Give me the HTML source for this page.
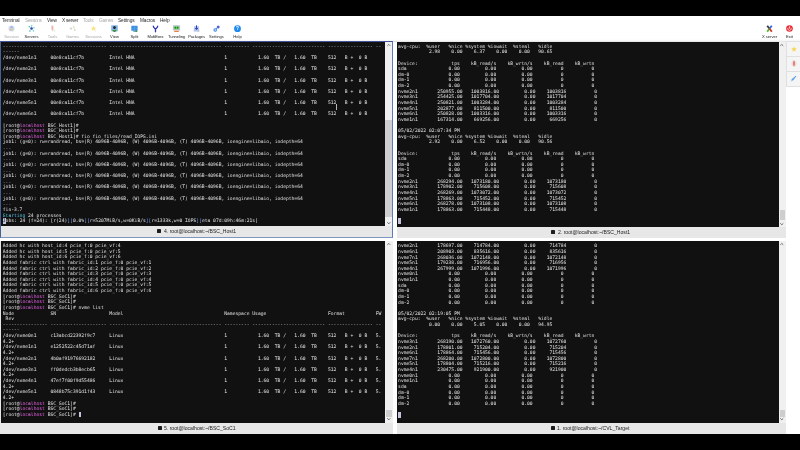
<!DOCTYPE html>
<html lang="en">
<head>
<meta charset="utf-8">
<title>MobaXterm</title>
<style>
html,body{margin:0;padding:0}
body{width:800px;height:450px;position:relative;overflow:hidden;background:#fff;font-family:"Liberation Sans",sans-serif;color:#222}
#top{position:absolute;left:0;top:0;width:800px;height:16px;background:#000}
#bot{position:absolute;left:0;top:434px;width:800px;height:16px;background:#000}
#menu{position:absolute;left:0;top:16px;width:800px;height:8px;background:#fff;font-size:4.75px;line-height:9.6px;white-space:nowrap;color:#2a2a2a}
#menu span{position:absolute;top:0}
#menu .g{color:#a9a9a9}
#tb{position:absolute;left:0;top:24px;width:800px;height:16.5px;background:linear-gradient(#fff 0,#fff 88%,#f4f4f4 100%);border-bottom:0.5px solid #e2e2e2}
.btn{position:absolute;top:0;width:21px;height:17px;text-align:center}
.btn svg{position:absolute;left:7px;top:1.4px;width:7px;height:7px;overflow:visible}
.btn b{position:absolute;left:-5px;right:-5px;top:10.2px;font-weight:normal;font-size:4.1px;line-height:5px;color:#1c1c1c;white-space:nowrap}
.btn.g b{color:#a6a6a6}
.pane{position:absolute;background:#e7e7e7;overflow:hidden;box-sizing:border-box}
#p1{left:0;top:41px;width:393px;height:196.6px}
#p2{left:397px;top:41px;width:389.6px;height:196.7px}
#p3{left:0;top:241px;width:393px;height:193px}
#p4{left:397px;top:241px;width:389.6px;height:193px}
.pane.act{border:1px solid #5c7bb8;border-top-color:#41539a;border-bottom:1.6px solid #7f95c4;border-left-color:#4a5f95}
.term{position:absolute;margin:0;left:0;top:0;will-change:transform;color:#d6d6d6;-webkit-text-stroke:0.04px #d6d6d6;font-family:"DejaVu Sans Mono","Liberation Mono",monospace;font-size:4.68px;line-height:5.625px;white-space:pre;overflow:hidden;box-sizing:border-box;padding:2.6px 0 0 2.6px}
#p1 .term{width:384px;height:184.5px;left:0.3px;top:0;padding:1.8px 0 0 1.8px}
#p2 .term{width:381.5px;height:185.5px;top:0.8px;padding:1.7px 0 0 1.1px}
#p3 .term{width:385px;height:182px;left:1.3px;padding:2px 0 0 1.8px}
#p4 .term{width:381.5px;height:182px;padding:2.3px 0 0 1.1px}
.m{color:#e13ee1}
.c{color:#35b5d8}
.b{color:#4d86f0}
.d{color:#9c9ca0}
.d2{color:#8c8c8c}
.cur{background:#c4c4dc;color:#111;display:inline-block;width:2.82px;height:5.9px;vertical-align:top;margin-top:-0.2px;-webkit-text-stroke:0}
.sb{position:absolute;top:0;width:8px;background:#f0f0f0}
#p1 .sb{left:384px;width:7.2px;height:184.5px}
#p2 .sb{left:381.7px;top:0.8px;height:185.5px}
#p3 .sb{left:385px;width:8px;height:182px}
#p4 .sb{left:381.7px;height:182px}
.sb i{position:absolute;left:0;right:0;display:block}
.sb svg{position:absolute;left:1.8px;width:3.6px;height:2.2px;overflow:visible}
.sb svg.up{top:2.4px}
.sb svg.dn{bottom:2.4px}
.sb .th{background:#cecece}
.tab{position:absolute;left:0;right:0;bottom:0;height:10.5px;background:#e7e7e7;font-size:5.1px;line-height:10.5px;white-space:nowrap;color:#222}
.tab .ti{position:absolute;top:3.3px;width:4.4px;height:3.7px;background:#1c1c1c;border-radius:0.4px}
.tab .tt{position:absolute;top:-0.2px;will-change:transform;color:#222}
#p1 .ti{left:156px}#p1 .tt{left:162.8px}
#p2 .ti{left:153.8px}#p2 .tt{left:160.5px}
#p3 .ti{left:157.5px;top:2.6px}#p3 .tt{left:163.8px}
#p4 .ti{left:153.8px;top:2.6px}#p4 .tt{left:160.2px}
#side{position:absolute;left:786.4px;top:41.5px;width:13px;height:393px;background:#fff}
.sbtn{width:13.6px;height:15px;box-sizing:border-box;background:#f5f5f5;border-left:0.6px solid #e0e0e0;border-bottom:0.6px solid #e0e0e0;display:flex;align-items:center;justify-content:center}

.bg{position:absolute;background:#111}
#p1 .bg{width:383.7px;height:184.5px;left:0.3px;top:0}
#p2 .bg{width:381.5px;height:185.5px;top:0.8px;left:0}
#p3 .bg{width:383.7px;height:182px;left:1.3px;top:0}
#p4 .bg{width:381.5px;height:182px;left:0;top:0}

#p3 .tt,#p4 .tt{top:-0.7px}
#menu span,.btn b{will-change:transform}

#ibeam{position:absolute;left:335.1px;top:61.7px;width:0.7px;height:6.2px;background:#b4b4b4}
#p2 .sb .th,#p3 .sb .th,#p4 .sb .th{left:1px;right:1.3px}
.btn.g svg{opacity:.8}

</style>
</head>
<body>
<div id="top"></div>
<div id="menu">
<span style="left:2.0px;letter-spacing:-0.056px">Terminal</span>
<span class="g" style="left:24.8px;letter-spacing:-0.348px">Sessions</span>
<span style="left:46.8px;letter-spacing:-0.055px">View</span>
<span style="left:61.8px;letter-spacing:-0.211px">X server</span>
<span class="g" style="left:83.3px;letter-spacing:-0.118px">Tools</span>
<span class="g" style="left:98.8px;letter-spacing:-0.262px">Games</span>
<span style="left:117.8px;letter-spacing:-0.084px">Settings</span>
<span style="left:139.8px;letter-spacing:-0.097px">Macros</span>
<span style="left:159.8px;letter-spacing:-0.070px">Help</span>
</div>
<div id="tb">
<div class="btn g" style="left:0.5px"><svg viewBox="0 0 14 14"><circle cx="7" cy="7" r="6.6" fill="#e4e6f0"/><circle cx="7" cy="7" r="5" fill="#b9cdf0"/><path d="M2.6 7.5 L7 7.5 L6 12 C4 11.6 2.8 9.8 2.6 7.5Z" fill="#f0a183"/><path d="M7.4 7 L11.6 7 C11.4 9.6 10 11.4 7.6 12Z" fill="#9fd69a"/><path d="M4 4.2 C5.4 1.6 9 1.6 10.4 4.4 L7 6.6Z" fill="#7f9fe6"/></svg><b>Session</b></div>
<div class="btn" style="left:21px"><svg viewBox="0 0 14 14"><g stroke="#5fd0d0" stroke-width="0.6"><path d="M7 7L2.4 3.4M7 7L11.8 5.6M7 7L4 12M7 7L10.6 11.6M7 7L7.4 1.6"/></g><circle cx="7" cy="7" r="2.5" fill="#3a3fb0"/><circle cx="2.4" cy="3.4" r="1.4" fill="#19bfae"/><circle cx="12" cy="5.6" r="1.3" fill="#19bfae"/><circle cx="3.8" cy="12" r="1.4" fill="#19bfae"/><circle cx="10.8" cy="11.6" r="1.3" fill="#19bfae"/><circle cx="7.4" cy="1.6" r="1.3" fill="#19bfae"/></svg><b>Servers</b></div>
<div class="btn g" style="left:41.7px"><svg viewBox="0 0 14 14"><path d="M4.6 1 L9 1 L9.6 9.6 L4.4 9.6Z" fill="#e3e0f0"/><path d="M5.6 1.2 L8.2 1.8 L8.4 9.4 L5.4 9.4Z" fill="#f29a82"/><path d="M5.6 9.4 L8.2 9.4 L7.4 13 L6.2 13Z" fill="#f6cbb4"/><path d="M9.6 9.4 L11 9.4 L11 13 L9.6 13Z" fill="#a9c7a8"/></svg><b>Tools</b></div>
<div class="btn g" style="left:62.3px"><svg viewBox="0 0 14 14"><path d="M1.6 7 L6.4 7 M4 4.6 L4 9.4" stroke="#bdbdbd" stroke-width="1.6"/><path d="M7.6 2.6 L10 1.6 L13 10 L10.6 11Z" fill="#d9e6c4"/><circle cx="9" cy="3.6" r="1.6" fill="#cfe0b4"/><path d="M10.4 9.6 L13 9.6 L13 11.6 L10.4 11.6Z" fill="#a8c89a"/></svg><b>Games</b></div>
<div class="btn g" style="left:83px"><svg viewBox="0 0 14 14"><polygon points="7,1.6 8.7,5.2 12.6,5.7 9.7,8.3 10.5,12.2 7,10.2 3.5,12.2 4.3,8.3 1.4,5.7 5.3,5.2" fill="#f7e071"/><path d="M10 11.4 L12.4 11.4 L12.4 12.6 L10 12.6Z" fill="#c9c9c9"/></svg><b>Sessions</b></div>
<div class="btn" style="left:103.5px"><svg viewBox="0 0 14 14"><rect x="0.4" y="0.4" width="13.2" height="12" rx="1" fill="#86b4ea"/><ellipse cx="7" cy="5" rx="2.7" ry="3.2" fill="#20242a"/><path d="M2.6 12.4 C3 8.6 11 8.6 11.4 12.4Z" fill="#3aa635"/><path d="M5 12.4 L9 12.4 L9 13.6 L5 13.6Z" fill="#2b2b2b"/></svg><b>View</b></div>
<div class="btn" style="left:124.2px"><svg viewBox="0 0 14 14"><rect x="0.6" y="1.4" width="12.6" height="10" rx="0.8" fill="#3d8fe0"/><path d="M7 1.6 L7 11.2 M0.8 6.4 L13 6.4" stroke="#6fb4f6" stroke-width="0.7"/><rect x="4.4" y="11.4" width="5.2" height="2" fill="#4b8fc8"/><rect x="8.8" y="10.8" width="3.8" height="3" fill="#2f8a3f"/></svg><b>Split</b></div>
<div class="btn" style="left:144.9px"><svg viewBox="0 0 14 14"><path d="M2.6 2.2 C2.6 6.6 7 6 7 9 L7 13.6 M11.4 2.2 C11.4 6.6 7 6 7 9" fill="none" stroke="#3436b8" stroke-width="2.6" stroke-linecap="round"/></svg><b style="letter-spacing:-0.18px">MultiExec</b></div>
<div class="btn" style="left:165.6px"><svg viewBox="0 0 14 14"><rect x="-0.2" y="0.6" width="14.4" height="10.6" rx="1.2" fill="#c4c0d4"/><rect x="1.8" y="2.6" width="10.4" height="6" fill="#62cf5a"/><path d="M2.6 5.6 L6 3.6 L6 7.6Z M11.4 5.6 L8 3.6 L8 7.6Z" fill="#1f6f2a"/><rect x="2.2" y="11.4" width="9.6" height="2.6" rx="0.8" fill="#ee8040"/></svg><b style="letter-spacing:-0.08px">Tunneling</b></div>
<div class="btn" style="left:185.8px"><svg viewBox="0 0 14 14"><path d="M2 2.6 L12 2.6 L12.6 13 L1.4 13Z" fill="#bcc6ee"/><path d="M4.4 2.6 L4.4 13 M9.6 2.6 L9.6 13" stroke="#9fb0e6" stroke-width="1"/><path d="M7 0.6 L7 8.4 M4.4 6 L7 9 L9.6 6" fill="none" stroke="#2b44b8" stroke-width="2"/><path d="M10.6 11.6 L12.4 11.6 L12.4 13.2 L10.6 13.2Z" fill="#7fbf8a"/></svg><b style="letter-spacing:-0.17px">Packages</b></div>
<div class="btn" style="left:206.4px"><svg viewBox="0 0 14 14"><path d="M5.4 8.4 L9 5" stroke="#2f86e6" stroke-width="1.8"/><circle cx="4.4" cy="10" r="2.5" fill="#fff" stroke="#2f86e6" stroke-width="2.1"/><circle cx="10.4" cy="3.8" r="3" fill="#5a62cc"/></svg><b>Settings</b></div>
<div class="btn" style="left:227px"><svg viewBox="0 0 14 14"><circle cx="7" cy="7.4" r="6.8" fill="#1e8bf0"/><text x="7" y="10.8" font-size="9.5" font-weight="bold" font-family="Liberation Sans, sans-serif" text-anchor="middle" fill="#fff">?</text></svg><b>Help</b></div>
<div class="btn" style="left:758.5px"><svg viewBox="0 0 14 14"><path d="M2.4 1.4 L7 7.4" stroke="#3a3a3a" stroke-width="3.6"/><path d="M11.6 1.4 L7.4 6.6" stroke="#2a63e0" stroke-width="3.6"/><path d="M6.6 7.6 L2.4 13.4" stroke="#52b92f" stroke-width="3.6"/><path d="M7 7 L11.6 13.4" stroke="#c8382c" stroke-width="3.6"/></svg><b>X server</b></div>
<div class="btn" style="left:779px"><svg viewBox="0 0 14 14"><circle cx="7" cy="7" r="6.6" fill="#e8262c"/><path d="M4.2 5.4 A3.4 3.4 0 1 0 9.8 5.4" fill="none" stroke="#fff" stroke-width="1.5"/><path d="M7 2.6 L7 7" stroke="#fff" stroke-width="1.5"/></svg><b>Exit</b></div>
</div>

<div class="pane act" id="p1">
<div class="bg"></div>
<pre class="term"><span class="d">---------------- -------------------- ---------------------------------------- --------- -------------------------- ---------------- --</span>
<span class="d">------</span>
/dev/nvme1n1     00e8ca11cf7b         Intel HNA                                1           1.60  TB /   1.60  TB    512   B +  0 B

/dev/nvme2n1     00e8ca11cf7b         Intel HNA                                1           1.60  TB /   1.60  TB    512   B +  0 B

/dev/nvme3n1     00e8ca11cf7b         Intel HNA                                1           1.60  TB /   1.60  TB    512   B +  0 B

/dev/nvme4n1     00e8ca11cf7b         Intel HNA                                1           1.60  TB /   1.60  TB    512   B +  0 B

/dev/nvme5n1     00e8ca11cf7b         Intel HNA                                1           1.60  TB /   1.60  TB    512   B +  0 B

/dev/nvme6n1     00e8ca11cf7b         Intel HNA                                1           1.60  TB /   1.60  TB    512   B +  0 B

[root@<span class="m">localhost</span> BSC_Host1]#
[root@<span class="m">localhost</span> BSC_Host1]#
[root@<span class="m">localhost</span> BSC_Host1]# fio fio_files/read_IOPS.ini
job1: (g=0): rw=randread, bs=(R) 4096B-4096B, (W) 4096B-4096B, (T) 4096B-4096B, ioengine=libaio, iodepth=64
<span class="d2">...</span>
job1: (g=0): rw=randread, bs=(R) 4096B-4096B, (W) 4096B-4096B, (T) 4096B-4096B, ioengine=libaio, iodepth=64
<span class="d2">...</span>
job1: (g=0): rw=randread, bs=(R) 4096B-4096B, (W) 4096B-4096B, (T) 4096B-4096B, ioengine=libaio, iodepth=64
<span class="d2">...</span>
job1: (g=0): rw=randread, bs=(R) 4096B-4096B, (W) 4096B-4096B, (T) 4096B-4096B, ioengine=libaio, iodepth=64
<span class="d2">...</span>
job1: (g=0): rw=randread, bs=(R) 4096B-4096B, (W) 4096B-4096B, (T) 4096B-4096B, ioengine=libaio, iodepth=64
<span class="d2">...</span>
job1: (g=0): rw=randread, bs=(R) 4096B-4096B, (W) 4096B-4096B, (T) 4096B-4096B, ioengine=libaio, iodepth=64
<span class="d2">...</span>
fio-3.7
<span class="c">Starting</span> 24 processes
<span class="cur">J</span>obs: 24 (f=24): [r(24)<span class="b">][</span>0.0%<span class="b">][</span>r=5207MiB/s,w=0KiB/s<span class="b">][</span>r=1333k,w=0 IOPS<span class="b">][</span>eta 07d:09h:46m:21s]</pre>
<div class="sb"><svg class="up" viewBox="0 0 36 22"><path d="M3 19 L18 4 L33 19" fill="none" stroke="#555" stroke-width="8"/></svg><i class="th" style="top:78px;height:97px"></i><svg class="dn" viewBox="0 0 36 22"><path d="M3 3 L18 18 L33 3" fill="none" stroke="#444" stroke-width="8"/></svg></div>
<div id="ibeam"></div>
<div class="tab"><span class="ti"></span><span class="tt">4. root@localhost:~/BSC_Host1</span></div>
</div>
<div class="pane" id="p2">
<div class="bg"></div>
<pre class="term">avg-cpu:  %user   %nice %system %iowait  %steal   %idle
           2.98    0.00    6.37    0.00    0.00   90.65

Device:            tps    kB_read/s    kB_wrtn/s    kB_read    kB_wrtn
sda               0.00         0.00         0.00          0          0
dm-0              0.00         0.00         0.00          0          0
dm-1              0.00         0.00         0.00          0          0
dm-2              0.00         0.00         0.00          0          0
nvme2n1       250955.00   1003816.00         0.00    1003816          0
nvme3n1       254425.00   1017704.00         0.00    1017704          0
nvme4n1       250821.00   1003284.00         0.00    1003284          0
nvme5n1       202877.00    811500.00         0.00     811500          0
nvme6n1       250828.00   1003316.00         0.00    1003316          0
nvme1n1       167314.00    669256.00         0.00     669256          0

05/02/2022 02:07:34 PM
avg-cpu:  %user   %nice %system %iowait  %steal   %idle
           2.92    0.00    6.52    0.00    0.00   90.56

Device:            tps    kB_read/s    kB_wrtn/s    kB_read    kB_wrtn
sda               0.00         0.00         0.00          0          0
dm-0              0.00         0.00         0.00          0          0
dm-1              0.00         0.00         0.00          0          0
dm-2              0.00         0.00         0.00          0          0
nvme2n1       268294.00   1073180.00         0.00    1073180          0
nvme3n1       178902.00    715608.00         0.00     715608          0
nvme4n1       268269.00   1073072.00         0.00    1073072          0
nvme5n1       178863.00    715452.00         0.00     715452          0
nvme6n1       268278.00   1073108.00         0.00    1073108          0
nvme1n1       178863.00    715448.00         0.00     715448          0

<span class="cur"> </span></pre>
<div class="sb"><svg class="up" viewBox="0 0 36 22"><path d="M3 19 L18 4 L33 19" fill="none" stroke="#555" stroke-width="8"/></svg><i class="th" style="top:167.8px;height:10px"></i><svg class="dn" viewBox="0 0 36 22"><path d="M3 3 L18 18 L33 3" fill="none" stroke="#444" stroke-width="8"/></svg></div>
<div class="tab"><span class="ti"></span><span class="tt">2. root@localhost:~/BSC_Host1</span></div>
</div>
<div class="pane" id="p3">
<div class="bg"></div>
<pre class="term">Added hc with host_id:4 pcie_f:0 pcie_vf:4
Added hc with host_id:5 pcie_f:0 pcie_vf:5
Added hc with host_id:6 pcie_f:0 pcie_vf:6
Added fabric ctrl with fabric_id:1 pcie_f:0 pcie_vf:1
Added fabric ctrl with fabric_id:2 pcie_f:0 pcie_vf:2
Added fabric ctrl with fabric_id:3 pcie_f:0 pcie_vf:3
Added fabric ctrl with fabric_id:4 pcie_f:0 pcie_vf:4
Added fabric ctrl with fabric_id:5 pcie_f:0 pcie_vf:5
Added fabric ctrl with fabric_id:6 pcie_f:0 pcie_vf:6
[root@<span class="m">localhost</span> BSC_SoC1]#
[root@<span class="m">localhost</span> BSC_SoC1]#
[root@<span class="m">localhost</span> BSC_SoC1]# nvme list
Node             SN                   Model                                    Namespace Usage                      Format           FW
 Rev
<span class="d">---------------- -------------------- ---------------------------------------- --------- -------------------------- ---------------- --</span>
<span class="d">------</span>
/dev/nvme0n1     c13abcd22392f9c7     Linux                                    1           1.60  TB /   1.60  TB    512   B +  0 B   5.
4.2+
/dev/nvme1n1     e1252522c45d71af     Linux                                    1           1.60  TB /   1.60  TB    512   B +  0 B   5.
4.2+
/dev/nvme2n1     4b0af91976692182     Linux                                    1           1.60  TB /   1.60  TB    512   B +  0 B   5.
4.2+
/dev/nvme3n1     ff0dedcb3b8ecb65     Linux                                    1           1.60  TB /   1.60  TB    512   B +  0 B   5.
4.2+
/dev/nvme4n1     47ef7f00f9d55486     Linux                                    1           1.60  TB /   1.60  TB    512   B +  0 B   5.
4.2+
/dev/nvme5n1     0848b75c391d1f43     Linux                                    1           1.60  TB /   1.60  TB    512   B +  0 B   5.
4.2+
[root@<span class="m">localhost</span> BSC_SoC1]#
[root@<span class="m">localhost</span> BSC_SoC1]#
[root@<span class="m">localhost</span> BSC_SoC1]# <span class="cur"> </span></pre>
<div class="sb"><svg class="up" viewBox="0 0 36 22"><path d="M3 19 L18 4 L33 19" fill="none" stroke="#555" stroke-width="8"/></svg><i class="th" style="top:169px;height:6.6px"></i><svg class="dn" viewBox="0 0 36 22"><path d="M3 3 L18 18 L33 3" fill="none" stroke="#444" stroke-width="8"/></svg></div>
<div class="tab"><span class="ti"></span><span class="tt">5. root@localhost:~/BSC_SoC1</span></div>
</div>
<div class="pane" id="p4">
<div class="bg"></div>
<pre class="term">nvme2n1       178697.00    714784.00         0.00     714784          0
nvme6n1       208903.00    835616.00         0.00     835616          0
nvme7n1       268036.00   1072148.00         0.00    1072148          0
nvme5n1       179238.00    716956.00         0.00     716956          0
nvme4n1       267999.00   1071996.00         0.00    1071996          0
nvme0n1           0.00         0.00         0.00          0          0
nvme1n1           0.00         0.00         0.00          0          0
sda               0.00         0.00         0.00          0          0
dm-0              0.00         0.00         0.00          0          0
dm-1              0.00         0.00         0.00          0          0
dm-2              0.00         0.00         0.00          0          0

05/02/2022 02:19:05 PM
avg-cpu:  %user   %nice %system %iowait  %steal   %idle
           0.00    0.00    5.05    0.00    0.00   94.95

Device:            tps    kB_read/s    kB_wrtn/s    kB_read    kB_wrtn
nvme3n1       268190.00   1072760.00         0.00    1072760          0
nvme2n1       178801.00    715204.00         0.00     715204          0
nvme6n1       178864.00    715456.00         0.00     715456          0
nvme7n1       268200.00   1072800.00         0.00    1072800          0
nvme5n1       178804.00    715216.00         0.00     715216          0
nvme4n1       230475.00    921900.00         0.00     921900          0
nvme0n1           0.00         0.00         0.00          0          0
nvme1n1           0.00         0.00         0.00          0          0
sda               0.00         0.00         0.00          0          0
dm-0              0.00         0.00         0.00          0          0
dm-1              0.00         0.00         0.00          0          0
dm-2              0.00         0.00         0.00          0          0

<span class="cur"> </span></pre>
<div class="sb"><svg class="up" viewBox="0 0 36 22"><path d="M3 19 L18 4 L33 19" fill="none" stroke="#555" stroke-width="8"/></svg><i class="th" style="top:169px;height:6.6px"></i><svg class="dn" viewBox="0 0 36 22"><path d="M3 3 L18 18 L33 3" fill="none" stroke="#444" stroke-width="8"/></svg></div>
<div class="tab"><span class="ti"></span><span class="tt">1. root@localhost:~/CVL_Target</span></div>
</div>
<div id="side">
<div class="sbtn"><svg viewBox="0 0 10 10" width="6" height="6"><polygon points="5,0.6 6.3,3.6 9.6,3.9 7.1,6.1 7.9,9.4 5,7.6 2.1,9.4 2.9,6.1 0.4,3.9 3.7,3.6" fill="#f5d653"/></svg></div>
<div class="sbtn"><svg viewBox="0 0 10 12" width="6" height="9"><ellipse cx="5" cy="6" rx="4.4" ry="4.8" fill="#e2dff0"/><path d="M5 0.4 C6.8 3 6.6 7.4 6 9.6 L4 9.6 C3.4 7.4 3.2 3 5 0.4Z" fill="#f2673c"/><path d="M3.8 9.8 L5 11.6 L6.2 9.8Z" fill="#f7a35c"/></svg></div>
<div class="sbtn"><svg viewBox="0 0 10 10" width="7" height="7"><path d="M1 9.2 L2.6 5.6 L8.4 1 L9.2 1.8 L4.6 7.6Z" fill="#5f9fe6"/><path d="M1 9.2 L2.2 6.6 L3.6 8Z" fill="#b9d3f3"/></svg></div>
</div>
<div id="bot"></div>
</body>
</html>
